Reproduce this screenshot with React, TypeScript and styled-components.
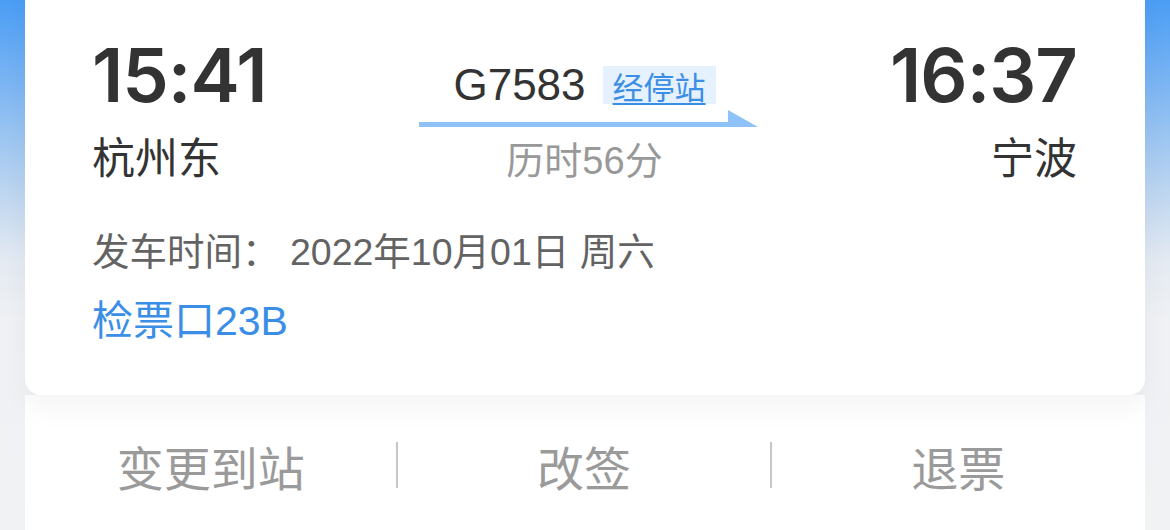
import React from "react";
import styled, { createGlobalStyle } from "styled-components";

const GlobalStyle = createGlobalStyle`
  html, body {
    margin: 0;
    padding: 0;
  }
  body {
    width: 1170px;
    height: 530px;
    overflow: hidden;
    font-family: "Liberation Sans", "Noto Sans CJK SC", sans-serif;
    background: linear-gradient(180deg, #4a9df5 0px, #7fb7f3 90px, #bcd5f0 190px, #e4eaf2 260px, #eff1f4 320px, #f1f2f4 530px);
  }
`;

const Page = styled.div`
  width: 1170px;
  height: 530px;
  box-sizing: border-box;
  padding: 0 25px;
  display: flex;
  flex-direction: column;
`;

const Card = styled.section`
  position: relative;
  z-index: 1;
  margin-top: -16px;
  padding: 53px 68px 54px 67px;
  background: #ffffff;
  border-radius: 16px;
  box-shadow: 0 14px 28px rgba(0, 0, 0, 0.045);
`;

const TopRow = styled.div`
  display: grid;
  grid-template-columns: 1fr auto 1fr;
  align-items: start;
`;

const StationCol = styled.div<{ $align: "left" | "right" }>`
  display: flex;
  flex-direction: column;
  align-items: ${(p) => (p.$align === "left" ? "flex-start" : "flex-end")};
`;

const Time = styled.div`
  font-family: "Inter", "Liberation Sans", sans-serif;
  font-size: 74px;
  line-height: 76px;
  font-weight: 600;
  color: #333333;
  letter-spacing: -1px;
`;

const Station = styled.div`
  margin-top: 25px;
  font-size: 43px;
  line-height: 42px;
  color: #333333;
`;

const Middle = styled.div`
  display: flex;
  flex-direction: column;
  align-items: center;
`;

const TrainLine = styled.div`
  margin-top: 29px;
  height: 38px;
  display: flex;
  align-items: center;
  gap: 17px;
`;

const TrainNo = styled.span`
  font-size: 44px;
  line-height: 38px;
  color: #333333;
`;

const StopsBadge = styled.span`
  height: 38px;
  padding: 0 10px;
  display: flex;
  align-items: center;
  background: #e5f1fd;
  color: #3a8ee6;
  font-size: 31px;
  text-decoration: underline;
  text-underline-offset: 4px;
  text-decoration-thickness: 2px;
`;

const Arrow = styled.svg`
  display: block;
  margin-top: 6px;
  margin-left: 7px;
`;

const Duration = styled.div`
  margin-top: 15px;
  font-size: 38px;
  line-height: 38px;
  color: #999999;
`;

const InfoLine = styled.div`
  margin-top: 54px;
  font-size: 37.5px;
  line-height: 37px;
  color: #636363;
`;

const Gate = styled.div`
  margin-top: 30px;
  font-size: 41px;
  line-height: 40px;
  color: #3a8ee6;
`;

const Actions = styled.nav`
  flex: 1;
  background: #ffffff;
  display: grid;
  grid-template-columns: repeat(3, 1fr);
  align-items: start;
  padding-top: 47px;
`;

const ActionItem = styled.button`
  height: 46px;
  display: flex;
  align-items: center;
  justify-content: center;
  background: transparent;
  border: none;
  padding: 0;
  font-family: inherit;
  font-size: 47px;
  color: #9a9a9a;
  &:not(:last-child) {
    border-right: 2px solid #c6c6c6;
  }
`;

export default function App() {
  return (
    <>
      <GlobalStyle />
      <Page>
        <Card>
          <TopRow>
            <StationCol $align="left">
              <Time>15:41</Time>
              <Station>杭州东</Station>
            </StationCol>
            <Middle>
              <TrainLine>
                <TrainNo>G7583</TrainNo>
                <StopsBadge>经停站</StopsBadge>
              </TrainLine>
              <Arrow width="339" height="17" viewBox="0 0 339 17">
                <rect x="0" y="12" width="312" height="5" fill="#8ec2f8" />
                <polygon points="309,0 339,17 309,17" fill="#8ec2f8" />
              </Arrow>
              <Duration>历时56分</Duration>
            </Middle>
            <StationCol $align="right">
              <Time>16:37</Time>
              <Station>宁波</Station>
            </StationCol>
          </TopRow>
          <InfoLine>发车时间： 2022年10月01日 周六</InfoLine>
          <Gate>检票口23B</Gate>
        </Card>
        <Actions>
          <ActionItem>变更到站</ActionItem>
          <ActionItem>改签</ActionItem>
          <ActionItem>退票</ActionItem>
        </Actions>
      </Page>
    </>
  );
}
